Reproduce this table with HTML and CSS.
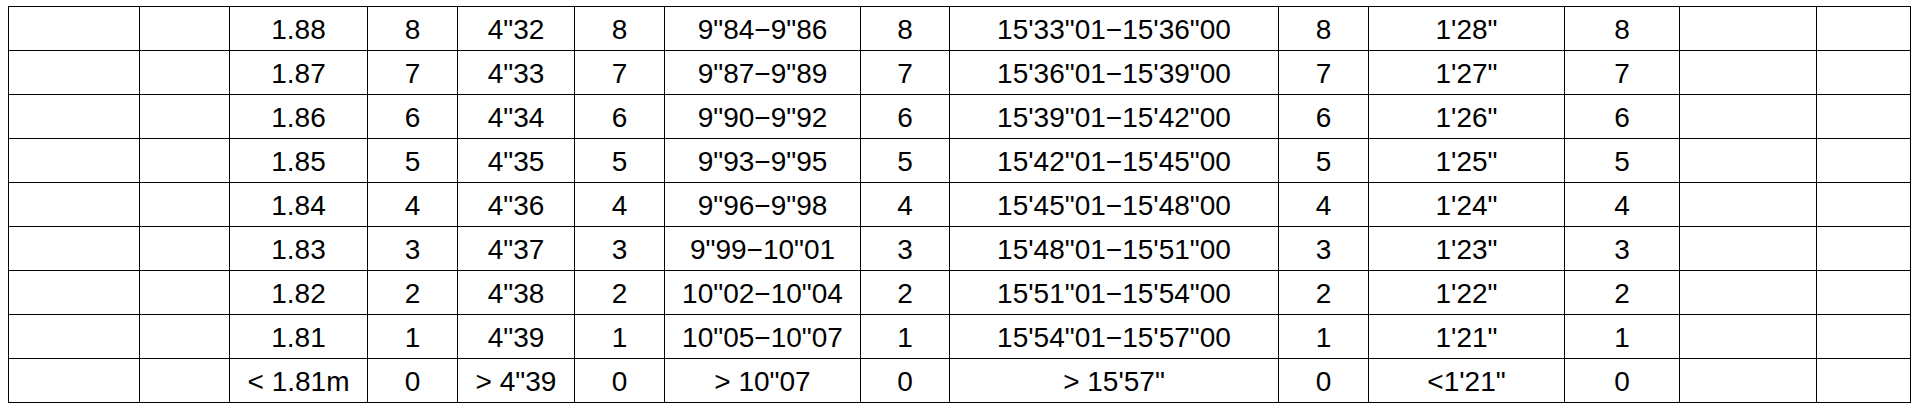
FILE: index.html
```html
<!DOCTYPE html>
<html>
<head>
<meta charset="utf-8">
<link rel="stylesheet" href="styles.css">
</head>
<body>
<table class="score">
<colgroup>
<col class="c1"><col class="c2"><col class="c3"><col class="c4"><col class="c5"><col class="c6"><col class="c7"><col class="c8"><col class="c9"><col class="c10"><col class="c11"><col class="c12"><col class="c13"><col class="c14">
</colgroup>
<tbody>
<tr><td></td><td></td><td>1.88</td><td>8</td><td>4"32</td><td>8</td><td>9"84−9"86</td><td>8</td><td>15'33"01−15'36"00</td><td>8</td><td>1'28"</td><td>8</td><td></td><td></td></tr>
<tr><td></td><td></td><td>1.87</td><td>7</td><td>4"33</td><td>7</td><td>9"87−9"89</td><td>7</td><td>15'36"01−15'39"00</td><td>7</td><td>1'27"</td><td>7</td><td></td><td></td></tr>
<tr><td></td><td></td><td>1.86</td><td>6</td><td>4"34</td><td>6</td><td>9"90−9"92</td><td>6</td><td>15'39"01−15'42"00</td><td>6</td><td>1'26"</td><td>6</td><td></td><td></td></tr>
<tr><td></td><td></td><td>1.85</td><td>5</td><td>4"35</td><td>5</td><td>9"93−9"95</td><td>5</td><td>15'42"01−15'45"00</td><td>5</td><td>1'25"</td><td>5</td><td></td><td></td></tr>
<tr><td></td><td></td><td>1.84</td><td>4</td><td>4"36</td><td>4</td><td>9"96−9"98</td><td>4</td><td>15'45"01−15'48"00</td><td>4</td><td>1'24"</td><td>4</td><td></td><td></td></tr>
<tr><td></td><td></td><td>1.83</td><td>3</td><td>4"37</td><td>3</td><td>9"99−10"01</td><td>3</td><td>15'48"01−15'51"00</td><td>3</td><td>1'23"</td><td>3</td><td></td><td></td></tr>
<tr><td></td><td></td><td>1.82</td><td>2</td><td>4"38</td><td>2</td><td>10"02−10"04</td><td>2</td><td>15'51"01−15'54"00</td><td>2</td><td>1'22"</td><td>2</td><td></td><td></td></tr>
<tr><td></td><td></td><td>1.81</td><td>1</td><td>4"39</td><td>1</td><td>10"05−10"07</td><td>1</td><td>15'54"01−15'57"00</td><td>1</td><td>1'21"</td><td>1</td><td></td><td></td></tr>
<tr><td></td><td></td><td>&lt; 1.81m</td><td>0</td><td>&gt; 4"39</td><td>0</td><td>&gt; 10"07</td><td>0</td><td>&gt; 15'57"</td><td>0</td><td>&lt;1'21"</td><td>0</td><td></td><td></td></tr>
</tbody>
</table>
</body>
</html>
```
FILE: styles.css
```css
html, body {
  background: #fff;
}
body {
  margin: 6px 8px;
  font-family: "Liberation Sans", Arial, sans-serif;
  color: #000;
}
.score {
  border-collapse: collapse;
  table-layout: fixed;
  width: 1902px;
}
.score td {
  border: 1px solid #000;
  height: 44px;
  padding: 3px 0 0 0;
  box-sizing: border-box;
  text-align: center;
  vertical-align: middle;
  font-size: 28px;
  line-height: 32px;
  white-space: nowrap;
}
.c1 { width: 131px; }
.c2 { width: 90px; }
.c3 { width: 138px; }
.c4 { width: 90px; }
.c5 { width: 117px; }
.c6 { width: 90px; }
.c7 { width: 196px; }
.c8 { width: 89px; }
.c9 { width: 329px; }
.c10 { width: 90px; }
.c11 { width: 196px; }
.c12 { width: 115px; }
.c13 { width: 137px; }
.c14 { width: 94px; }
```
